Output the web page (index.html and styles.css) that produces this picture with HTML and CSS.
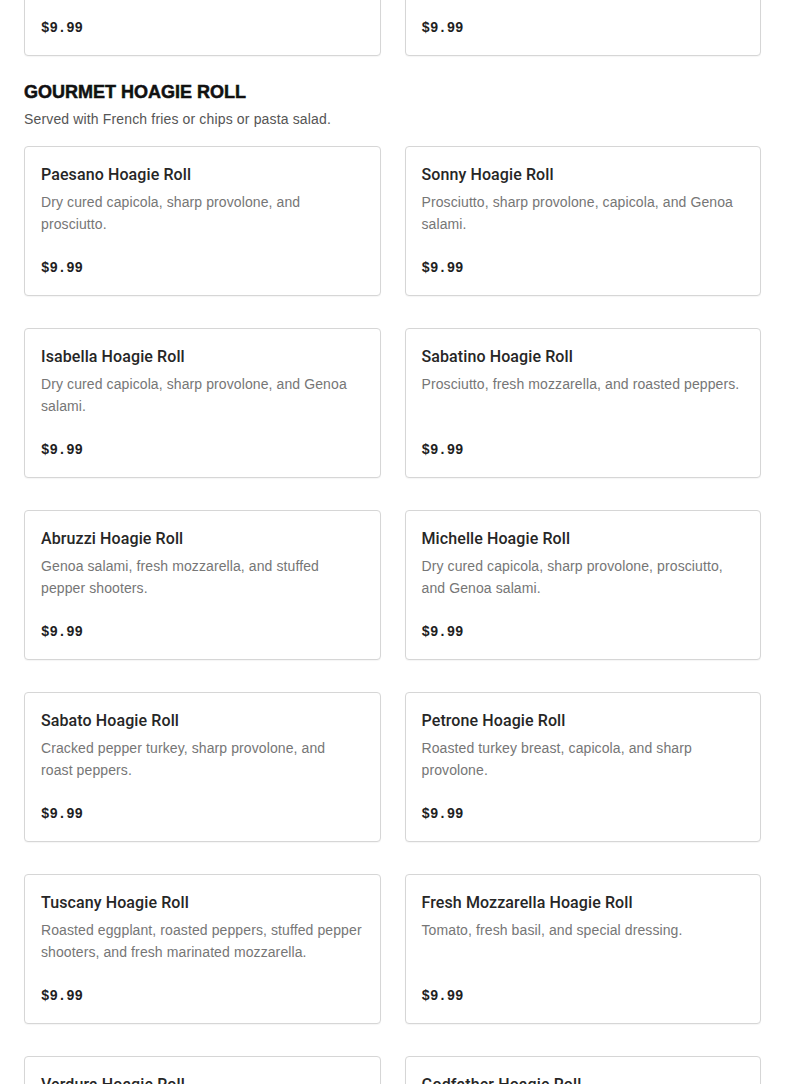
FILE: index.html
```html
<!DOCTYPE html>
<html lang="en">
<head>
<meta charset="utf-8">
<title>Gourmet Hoagie Roll</title>
<link rel="stylesheet" href="styles.css">
</head>
<body>
<main class="page">
  <div class="grid grid--prev">
    <article class="card card--cut"><p class="price">$9.99</p></article>
    <article class="card card--cut"><p class="price">$9.99</p></article>
  </div>

  <section class="section">
    <h2 class="section-title">GOURMET HOAGIE ROLL</h2>
    <p class="section-sub">Served with French fries or chips or pasta salad.</p>

    <div class="grid">
      <article class="card">
        <h3 class="card-title">Paesano Hoagie Roll</h3>
        <p class="card-desc">Dry cured capicola, sharp provolone, and prosciutto.</p>
        <p class="price">$9.99</p>
      </article>
      <article class="card">
        <h3 class="card-title">Sonny Hoagie Roll</h3>
        <p class="card-desc">Prosciutto, sharp provolone, capicola, and Genoa salami.</p>
        <p class="price">$9.99</p>
      </article>
      <article class="card">
        <h3 class="card-title">Isabella Hoagie Roll</h3>
        <p class="card-desc">Dry cured capicola, sharp provolone, and Genoa salami.</p>
        <p class="price">$9.99</p>
      </article>
      <article class="card">
        <h3 class="card-title">Sabatino Hoagie Roll</h3>
        <p class="card-desc">Prosciutto, fresh mozzarella, and roasted peppers.</p>
        <p class="price">$9.99</p>
      </article>
      <article class="card">
        <h3 class="card-title">Abruzzi Hoagie Roll</h3>
        <p class="card-desc">Genoa salami, fresh mozzarella, and stuffed pepper shooters.</p>
        <p class="price">$9.99</p>
      </article>
      <article class="card">
        <h3 class="card-title">Michelle Hoagie Roll</h3>
        <p class="card-desc">Dry cured capicola, sharp provolone, prosciutto, and Genoa salami.</p>
        <p class="price">$9.99</p>
      </article>
      <article class="card">
        <h3 class="card-title">Sabato Hoagie Roll</h3>
        <p class="card-desc">Cracked pepper turkey, sharp provolone, and roast&nbsp;peppers.</p>
        <p class="price">$9.99</p>
      </article>
      <article class="card">
        <h3 class="card-title">Petrone Hoagie Roll</h3>
        <p class="card-desc">Roasted turkey breast, capicola, and sharp provolone.</p>
        <p class="price">$9.99</p>
      </article>
      <article class="card">
        <h3 class="card-title">Tuscany Hoagie Roll</h3>
        <p class="card-desc">Roasted eggplant, roasted peppers, stuffed pepper shooters, and fresh marinated mozzarella.</p>
        <p class="price">$9.99</p>
      </article>
      <article class="card">
        <h3 class="card-title">Fresh Mozzarella Hoagie Roll</h3>
        <p class="card-desc">Tomato, fresh basil, and special dressing.</p>
        <p class="price">$9.99</p>
      </article>
      <article class="card">
        <h3 class="card-title">Verdura Hoagie Roll</h3>
        <p class="card-desc">Grilled vegetables and fresh mozzarella.</p>
        <p class="price">$9.99</p>
      </article>
      <article class="card">
        <h3 class="card-title">Godfather Hoagie Roll</h3>
        <p class="card-desc">Genoa salami, capicola, prosciutto, and sharp provolone.</p>
        <p class="price">$9.99</p>
      </article>
    </div>
  </section>
</main>
</body>
</html>
```

FILE: styles.css
```css
* { box-sizing: border-box; }

html, body {
  margin: 0;
  padding: 0;
  background: #ffffff;
}

body {
  font-family: "Liberation Sans", Arial, sans-serif;
  color: #2a2a2a;
  overflow: hidden;
}

.page {
  padding: 0 24px;
}

.grid {
  display: grid;
  grid-template-columns: 1fr 1fr;
  column-gap: 24px;
  row-gap: 32px;
}

.grid--prev {
  margin-top: -94px;
}

.card {
  display: flex;
  flex-direction: column;
  border: 1px solid #d6d6d6;
  border-radius: 4px;
  padding: 16px;
  background: #fff;
  min-height: 150px;
  box-shadow: 0 1px 1px rgba(0, 0, 0, 0.04);
}

.card-title {
  margin: 0;
  font-family: Roboto, "Liberation Sans", Arial, sans-serif;
  font-size: 16px;
  line-height: 24px;
  font-weight: 500;
  color: #262626;
  letter-spacing: 0.1px;
}

.card-desc {
  margin: 4px 0 0;
  font-size: 14px;
  line-height: 22px;
  color: #767676;
  letter-spacing: 0.1px;
  min-height: 44px;
}

.price {
  margin: auto 0 0;
  padding-top: 22px;
  font-family: "Liberation Mono", "Courier New", monospace;
  font-weight: 700;
  font-size: 14px;
  line-height: 22px;
  color: #1f1f1f;
}

.section {
  padding-top: 24px;
}

.section-title {
  margin: 0;
  font-family: "Liberation Sans", Arial, sans-serif;
  font-weight: 900;
  font-size: 18px;
  line-height: 24px;
  color: #111;
  -webkit-text-stroke: 0.5px #111;
}

.section-sub {
  margin: 4px 0 16px;
  font-size: 14px;
  line-height: 22px;
  color: #555;
  letter-spacing: 0.15px;
}
```
